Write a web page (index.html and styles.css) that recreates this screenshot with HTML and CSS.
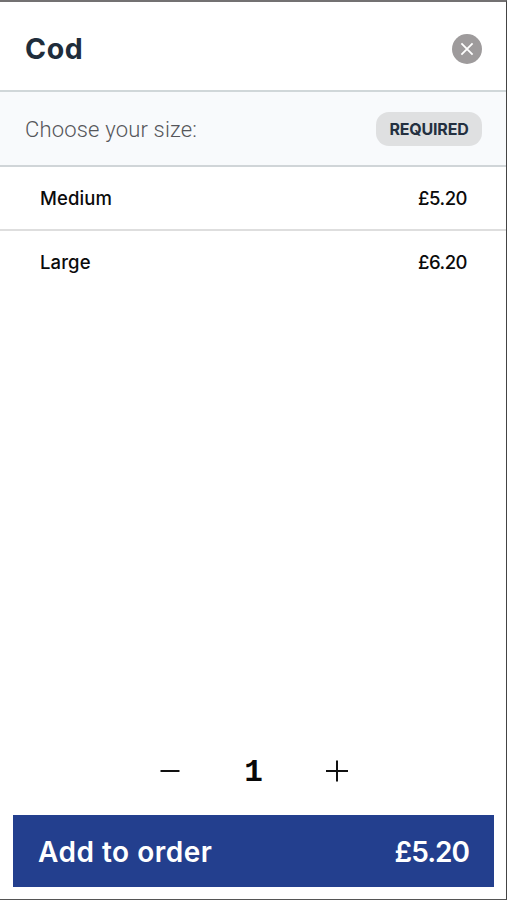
FILE: index.html
```html
<!DOCTYPE html>
<html lang="en">
<head>
<meta charset="utf-8">
<title>Cod</title>
<link rel="stylesheet" href="styles.css">
</head>
<body>
<main class="sheet">
  <header class="header">
    <h1 class="title"><span>Cod</span></h1>
    <button class="close" aria-label="Close">
      <svg width="30" height="30" viewBox="0 0 30 30"><circle cx="15" cy="15" r="15" fill="#9e9b9c"/><path d="M9.4 9.4l11.2 11.2M20.6 9.4L9.4 20.6" stroke="#fff" stroke-width="1.8" fill="none"/></svg>
    </button>
  </header>
  <section class="group">
    <h2 class="prompt"><span>Choose your size:</span></h2>
    <span class="badge"><span>REQUIRED</span></span>
  </section>
  <ul class="options">
    <li class="option"><span class="name">Medium</span><span class="price">£5.20</span></li>
    <li class="option"><span class="name">Large</span><span class="price">£6.20</span></li>
  </ul>
  <div class="quantity">
    <button class="step" aria-label="Decrease"><svg width="24" height="24" viewBox="0 0 24 24"><path d="M2.5 12h19" stroke="#111" stroke-width="2"/></svg></button>
    <span class="count">1</span>
    <button class="step" aria-label="Increase"><svg width="24" height="24" viewBox="0 0 24 24"><path d="M1 12h22M12 1.5v21" stroke="#111" stroke-width="2"/></svg></button>
  </div>
  <button class="order"><span class="order-label">Add to order</span><span class="order-price">£5.20</span></button>
</main>
</body>
</html>
```
FILE: styles.css
```css
* { box-sizing: border-box; }
body { margin: 0; background: #fff; font-family: Inter, "Liberation Sans", sans-serif; }
button { border: 0; padding: 0; background: none; font: inherit; display: flex; }
h1, h2, ul { margin: 0; padding: 0; }
.sheet {
  height: 900px;
  display: flex;
  flex-direction: column;
  border-top: 2px solid #737172;
  border-right: 1px solid #444;
  border-bottom: 1px solid #555;
}
.header {
  height: 90px;
  padding: 6px 24px 0 25px;
  display: flex;
  align-items: center;
  justify-content: space-between;
  border-bottom: 2px solid #d0d7d9;
}
.title { font: 700 28.5px/34px Inter, sans-serif; letter-spacing: .6px; color: #202d3b; }
.group {
  height: 75px;
  padding: 0 24px 0 25px;
  display: flex;
  align-items: center;
  justify-content: space-between;
  background: #f8fafc;
  border-bottom: 2px solid #d0d5d8;
}
.prompt { padding-top: 2px; font: 300 22px/26px Roboto, sans-serif; color: #55565a; letter-spacing: .18px; }
.badge {
  width: 106px;
  height: 34px;
  display: flex;
  align-items: center;
  justify-content: center;
  border-radius: 13px;
  background: #dfe0e1;
  color: #243040;
  font: 700 16px/20px Inter, sans-serif;
  letter-spacing: -.2px;
}
.options { list-style: none; }
.option {
  height: 64px;
  padding: 0 39px 1px 40px;
  display: flex;
  align-items: center;
  justify-content: space-between;
  font-size: 18.5px;
  font-weight: 500;
  color: #0b0b0b;
}
.option + .option { height: 63px; }
.name { letter-spacing: .1px; }
.price { letter-spacing: -.5px; }
.option:first-child { border-bottom: 2px solid #dedede; }
.quantity {
  margin-top: auto;
  height: 40px;
  margin-bottom: 24px;
  display: flex;
  align-items: center;
  justify-content: center;
  gap: 59px;
}
.step { padding-left: 1px; }
.count { width: 24px; padding-top: 3px; text-align: center; font: bold 31px/36px "Liberation Mono", monospace; letter-spacing: -1px; color: #080808; }
.order {
  height: 72px;
  margin: 0 12px 12px 13px;
  padding: 1px 25px 0;
  align-items: center;
  justify-content: space-between;
  background: #233f8e;
  color: #fff;
  font-size: 28px;
  font-weight: 600;
}
.order-label { letter-spacing: .5px; }
.order-price { letter-spacing: -1px; }
```
